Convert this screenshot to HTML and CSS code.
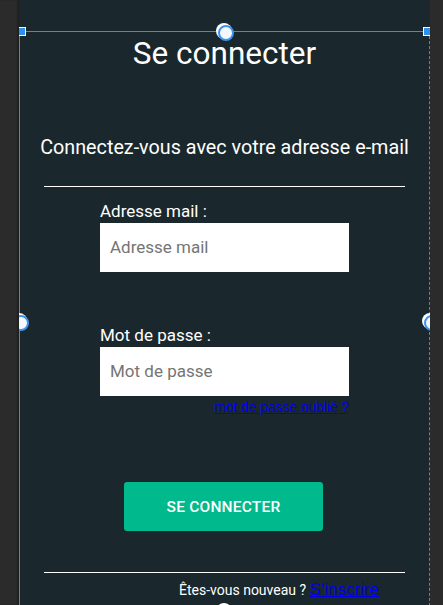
FILE: index.html
```html
<!DOCTYPE html>
<html lang="fr">
<head>
<meta charset="utf-8">
<title>Se connecter</title>
<link rel="stylesheet" href="styles.css">
</head>
<body>
<div class="stage">
  <div class="side side-left"></div>
  <div class="phone">
    <h1 class="title">Se connecter</h1>
    <p class="subtitle">Connectez-vous avec votre adresse e-mail</p>
    <div class="rule rule-top"></div>
    <form class="form">
      <label class="label">Adresse mail :</label>
      <div class="input">Adresse mail</div>
      <label class="label label-pass">Mot de passe :</label>
      <div class="input">Mot de passe</div>
      <a class="forgot" href="#">mot de passe oublié ?</a>
      <button type="button" class="btn">SE CONNECTER</button>
    </form>
    <div class="rule rule-bottom"></div>
    <p class="footer">Êtes-vous nouveau ? <a class="signup" href="#">S'inscrire</a></p>

    <div class="sel">
      <span class="sq sq-l"></span>
      <span class="sq sq-r"></span>
      <span class="knob knob-top"></span>
      <span class="knob knob-left"></span>
      <span class="knob knob-right"></span>
      <span class="knob knob-bottom"></span>
    </div>
  </div>
  <div class="side side-right"></div>
</div>
</body>
</html>
```
FILE: styles.css
```css
* { box-sizing: border-box; }
html, body { margin: 0; padding: 0; }
body {
  width: 443px;
  height: 605px;
  overflow: hidden;
  background: #2b2b2b;
  font-family: Roboto, "Liberation Sans", sans-serif;
}
.stage {
  display: flex;
  height: 605px;
}
.side { background: #2b2b2b; flex: none; }
.side-left { width: 19px; box-shadow: inset -2px 0 2px rgba(0,0,0,0.25); }
.side-right { width: 13px; }
.phone {
  position: relative;
  width: 411px;
  flex: none;
  background: #1a282d;
  display: flex;
  flex-direction: column;
  align-items: center;
  color: #fff;
  overflow: hidden;
}
.title {
  margin: 36px 0 0;
  font-size: 31.5px;
  line-height: 36px;
  font-weight: 400;
}
.subtitle {
  margin: 64px 0 0;
  font-size: 19.75px;
  line-height: 24px;
}
.rule {
  align-self: stretch;
  margin: 0 25px;
  height: 1px;
  background: #fff;
}
.rule-top { margin-top: 26px; }
.form {
  margin: 14px 0 0;
  width: 249px;
  display: flex;
  flex-direction: column;
}
.label {
  font-size: 17px;
  line-height: 20px;
}
.label-pass { margin-top: 53px; }
.input {
  margin-top: 2px;
  height: 49px;
  background: #fff;
  color: #757575;
  font-size: 17px;
  line-height: 49px;
  padding-left: 10px;
}
.forgot {
  align-self: flex-end;
  margin-top: 4px;
  font-family: "Liberation Sans", Arial, sans-serif;
  font-size: 13.8px;
  line-height: 15px;
  color: #0000ee;
}
.btn {
  align-self: center;
  margin: 67px 2px 0 0;
  width: 199px;
  height: 49px;
  border: 0;
  border-radius: 3px;
  background: #00b98c;
  color: #fff;
  font-family: Roboto, "Liberation Sans", sans-serif;
  font-size: 15.5px;
  font-weight: 500;
  letter-spacing: 0.2px;
}
.rule-bottom { margin-top: 41px; }
.footer {
  margin: 8px 0 0 109px;
  font-size: 14px;
  line-height: 18px;
}
.signup {
  color: #0000ee;
  font-family: "Liberation Sans", Arial, sans-serif;
  font-size: 17px;
}

/* selection overlay */
.sel {
  position: absolute;
  left: 0;
  top: 31px;
  width: 411px;
  height: 600px;
  border-top: 1px solid #2f8fef;
  border-left: 1px solid #2f8fef;
  border-right: 1px dashed #2f8fef;
  pointer-events: none;
}
.sq {
  position: absolute;
  top: -5px;
  width: 8px;
  height: 9px;
  background: #2f8fef;
  border: 1px solid #fff;
}
.sq-l { left: -2px; }
.sq-r { right: -2px; }
.knob {
  position: absolute;
  width: 16px;
  height: 16px;
  border-radius: 50%;
  background: #fff;
  padding: 2px;
}
.knob::after {
  content: "";
  display: block;
  width: 12px;
  height: 12px;
  border-radius: 50%;
  border: 2px solid #3d93f0;
  background: #f4f8fd;
}
.knob-top { top: -9px; left: 196px; }
.knob-left { top: 281px; left: -9px; }
.knob-right { top: 281px; right: -9px; }
.knob-bottom { top: 571px; left: 196px; }
```
